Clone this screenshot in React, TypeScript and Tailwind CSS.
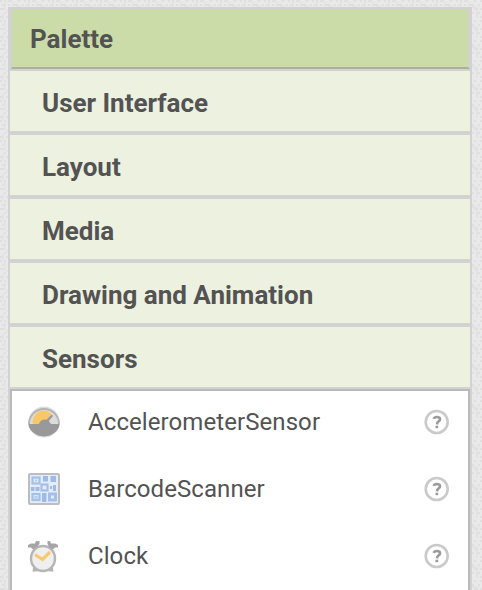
import type { ReactNode } from 'react';

const categories = ['User Interface', 'Layout', 'Media', 'Drawing and Animation', 'Sensors'];

function GaugeIcon() {
  return (
    <svg width="32" height="32" viewBox="0 0 32 32">
      <circle cx="16" cy="16" r="15.5" fill="#dcdcdc" />
      <path d="M1 18a15 15 0 0 1 30 0" fill="none" stroke="#b4b4b4" strokeWidth="1.8" />
      <path d="M5 18.5A11 11 0 0 1 23.5 8L18.5 14A6.5 6.5 0 0 0 11.5 18.5Z" fill="#f9c765" />
      <path d="M0.3 18H11C11.5 15 15 12.8 18.5 13.8L23.5 8.5L25 10L20.8 15L23 18H31.7A15.8 14 0 0 1 0.3 18Z" fill="#999" />
    </svg>
  );
}

function BarcodeIcon() {
  return (
    <svg width="32" height="32" viewBox="0 0 32 32">
      <rect width="32" height="32" rx="2" fill="#bdbdbd" />
      <rect x="2" y="2" width="28" height="28" fill="#e2ecfb" />
      <g fill="none" stroke="#a5c0e8" strokeWidth="2.2">
        <rect x="4.5" y="4.5" width="7" height="6" />
        <rect x="4.5" y="21" width="7" height="6" />
        <rect x="21.5" y="21" width="6" height="6" strokeWidth="3" />
        <rect x="13.5" y="11.5" width="6" height="6" />
      </g>
      <g fill="#9dbbe5">
        <path d="M15 3h5v5.500h-5zM22.500 3h5.500v6h-5.500zM3 14h3.500v4H3zM7.500 14h4v4h-4zM25 12h3v6h-3zM14 20h4.500v9h-4.500zM22 13h2v3h-2z" />
        <path d="M7 6.500h2v2H7zM6.500 23h3v2.500H6.500z" opacity=".7" />
      </g>
    </svg>
  );
}

function ClockIcon() {
  return (
    <svg width="32" height="34" viewBox="0 0 32 34">
      <path d="M5.500 25L4.500 32.500H9L12 29ZM24.500 25L25.500 32.500H21L18 29Z" fill="#b5b5b5" />
      <ellipse cx="15" cy="19.500" rx="12" ry="12.500" fill="#efefef" stroke="#b5b5b5" strokeWidth="2.400" />
      <path d="M0 6L3 4.500L7 4.500L8 2H11.500V5L9 8L5 10.500L3 8.500L0 8.500ZM30 6L27 4.500L23 4.500L22 2H19.500V5L21 8L25 10.500L27 8.500L30 8.500Z" fill="#a5a5a5" />
      <path d="M7 15.500L14.500 20.500L22 13" fill="none" stroke="#f9c76f" strokeWidth="3.200" />
    </svg>
  );
}

function HelpIcon() {
  return (
    <svg width="26" height="26" viewBox="0 0 26 26" className="mr-[18px]">
      <circle cx="12.700" cy="13" r="11" fill="#fff" stroke="#cacaca" strokeWidth="2.600" />
      <path d="M9.800 9.800Q10.300 8 13 8Q16 8 16 10.300Q16 11.800 14.400 12.600Q13.200 13.300 13 15.300" fill="none" stroke="#9a9a9a" strokeWidth="2.700" />
      <rect x="11.500" y="16.700" width="2.700" height="2.500" fill="#9a9a9a" />
    </svg>
  );
}

const items: { name: string; icon: ReactNode }[] = [
  { name: 'AccelerometerSensor', icon: <GaugeIcon /> },
  { name: 'BarcodeScanner', icon: <BarcodeIcon /> },
  { name: 'Clock', icon: <ClockIcon /> },
];

function Linen() {
  return (
    <svg className="absolute inset-0 -z-10" width="482" height="590">
      <defs>
        <pattern id="linen" width="24" height="20" patternUnits="userSpaceOnUse">
          <rect width="24" height="20" fill="#e9e9e9" />
          <path
            d="M0 0h2v2H0zM4 0h2v2H4zM8 0h4v2H8zM18 0h2v2h-2zM2 4h2v2H2zM8 4h2v2H8zM14 4h4v2h-4zM22 4h2v2h-2zM0 8h4v2H0zM8 8h2v2H8zM12 8h2v2h-2zM18 8h4v2h-4zM4 12h2v2H4zM8 12h4v2H8zM16 12h2v2h-2zM22 12h2v2h-2zM0 16h2v2H0zM6 16h2v2H6zM12 16h4v2h-4zM20 16h2v2h-2z"
            fill="#dfdfdf"
          />
          <path d="M4 2h2v8H4zM12 2h2v6h-2zM20 10h2v8h-2zM2 14h2v6H2zM14 14h2v6h-2zM6 10h6v2H6zM16 6h6v2h-6z" fill="#e3e3e3" />
        </pattern>
      </defs>
      <rect width="482" height="590" fill="url(#linen)" />
    </svg>
  );
}

export default function App() {
  return (
    <div className="relative isolate h-[590px] w-[482px] overflow-hidden px-2 pt-[7px] font-['Roboto',sans-serif] text-[26px] text-[#535353]">
      <Linen />
      <div className="h-[583px] w-[464px] bg-[#d2d2d2] pt-[2px]">
        <div className="ml-[3px] mr-[2px] border-b-2 border-l border-r-2 border-b-[#acb19f] border-l-[#d2d2d2] border-r-[#d2d2d2]">
          <h1 className="h-[58px] bg-[#ccdca9] pl-[18px] font-bold leading-[60px]">Palette</h1>
        </div>
        <nav className="mx-[2px] mt-[2px] flex flex-col gap-1">
          {categories.map((name) => (
            <div key={name} className="h-[60px] bg-[#edf1df] pl-8 font-bold leading-[64px]">{name}</div>
          ))}
        </nav>
        <div className="mx-[2px] mt-[2px] h-[201px] overflow-hidden border-2 border-b-0 border-[#b9b9b9] bg-white">
          <ul className="-mt-[3px]">
            {items.map((i) => (
              <li key={i.name} className="flex h-[67px] items-center pl-4">
                <div className="w-[60px]">{i.icon}</div>
                <span className="flex-1 text-2xl leading-[30px] tracking-[0.08px]">{i.name}</span>
                <HelpIcon />
              </li>
            ))}
          </ul>
        </div>
      </div>
    </div>
  );
}
